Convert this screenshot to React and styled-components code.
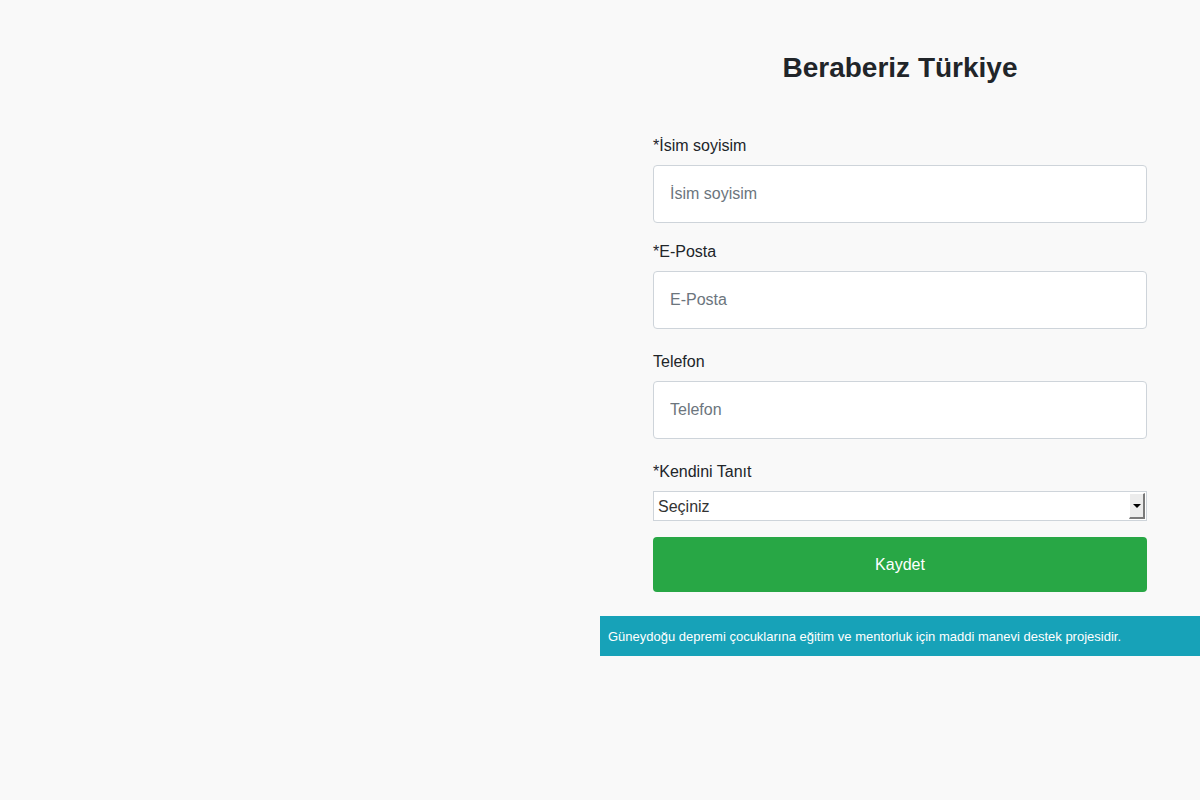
import React from 'react';
import styled, { createGlobalStyle } from 'styled-components';

const GlobalStyle = createGlobalStyle`
  html, body {
    margin: 0;
    padding: 0;
    background: #f9f9f9;
    font-family: 'Liberation Sans', Arial, sans-serif;
    color: #212529;
  }
`;

const Page = styled.div`
  display: grid;
  grid-template-columns: 600px 600px;
  min-height: 800px;
`;

const Side = styled.div``;

const Main = styled.div`
  display: flex;
  flex-direction: column;
`;

const FormWrap = styled.div`
  padding: 51px 53px 0 53px;
  display: flex;
  flex-direction: column;
`;

const Title = styled.h1`
  margin: 0 0 49px 0;
  font-size: 28px;
  line-height: 34px;
  font-weight: 700;
  text-align: center;
  color: #212529;
`;

const Field = styled.div`
  display: flex;
  flex-direction: column;
  margin-bottom: ${(p) => p.$gap || 16}px;
`;

const Label = styled.label`
  font-size: 16px;
  line-height: 24px;
  margin-bottom: 7px;
  color: #212529;
`;

const Input = styled.input`
  box-sizing: border-box;
  height: 58px;
  width: 100%;
  padding: 0 16px;
  border: 1px solid #ced4da;
  border-radius: 4px;
  background: #fff;
  font-family: inherit;
  font-size: 16px;
  color: #495057;
  outline: none;
  &::placeholder {
    color: #6c757d;
  }
`;

const SelectBox = styled.div`
  position: relative;
  height: 30px;
  box-sizing: border-box;
  border: 1px solid #ced4da;
  background: #fff;
`;

const Select = styled.select`
  appearance: none;
  -webkit-appearance: none;
  width: 100%;
  height: 28px;
  border: none;
  background: transparent;
  padding: 0 4px;
  font-family: inherit;
  font-size: 16px;
  color: #333;
  outline: none;
`;

const ArrowBtn = styled.span`
  position: absolute;
  top: 1px;
  right: 1px;
  width: 16px;
  height: 26px;
  box-sizing: border-box;
  background: #ececec;
  border-top: 1px solid #fff;
  border-left: 1px solid #fff;
  border-right: 2px solid #7a7a7a;
  border-bottom: 2px solid #7a7a7a;
  display: flex;
  align-items: center;
  justify-content: center;
  pointer-events: none;
  &::after {
    content: '';
    border-left: 4px solid transparent;
    border-right: 4px solid transparent;
    border-top: 4px solid #000;
  }
`;

const SubmitButton = styled.button`
  height: 55px;
  width: 100%;
  border: none;
  border-radius: 4px;
  background: #28a745;
  color: #fff;
  font-family: inherit;
  font-size: 16px;
  cursor: pointer;
`;

const InfoBar = styled.div`
  margin-top: 24px;
  height: 40px;
  background: #17a2b8;
  color: #fff;
  font-size: 13px;
  display: flex;
  align-items: center;
  padding: 0 8px;
`;

const App = () => (
  <>
    <GlobalStyle />
    <Page>
      <Side />
      <Main>
        <FormWrap>
          <Title>Beraberiz Türkiye</Title>
          <Field $gap={17}>
            <Label>*İsim soyisim</Label>
            <Input type="text" placeholder="İsim soyisim" />
          </Field>
          <Field $gap={21}>
            <Label>*E-Posta</Label>
            <Input type="email" placeholder="E-Posta" />
          </Field>
          <Field $gap={21}>
            <Label>Telefon</Label>
            <Input type="tel" placeholder="Telefon" />
          </Field>
          <Field>
            <Label>*Kendini Tanıt</Label>
            <SelectBox>
              <Select defaultValue="">
                <option value="">Seçiniz</option>
              </Select>
              <ArrowBtn />
            </SelectBox>
          </Field>
          <SubmitButton type="submit">Kaydet</SubmitButton>
        </FormWrap>
        <InfoBar>Güneydoğu depremi çocuklarına eğitim ve mentorluk için maddi manevi destek projesidir.</InfoBar>
      </Main>
    </Page>
  </>
);

export default App;
